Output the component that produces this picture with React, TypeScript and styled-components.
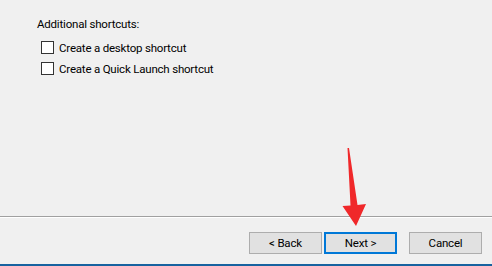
import styled, { createGlobalStyle } from "styled-components";

const uiFont = `"Segoe UI", Roboto, "Noto Sans", sans-serif`;

const GlobalStyle = createGlobalStyle`
  html, body {
    margin: 0;
    padding: 0;
    background: #f0f0f0;
  }
  body {
    font-family: ${uiFont};
    font-size: 11.5px;
    letter-spacing: -0.2px;
    color: #000;
  }
`;

const Window = styled.div`
  position: relative;
  width: 492px;
  height: 266px;
  display: flex;
  flex-direction: column;
  background: #f0f0f0;
  overflow: hidden;
`;

const Body = styled.div`
  flex: 0 0 216px;
  padding: 16px 0 0 37px;
  box-sizing: border-box;
`;

const Label = styled.div`
  height: 16px;
  line-height: 16px;
  margin-bottom: 5px;
`;

const CheckRow = styled.label`
  display: flex;
  align-items: center;
  gap: 5px;
  height: 21px;
  line-height: 16px;
  margin-left: 4px;
`;

const Box = styled.span`
  width: 11px;
  height: 11px;
  border: 1px solid #333;
  background: #fff;
  flex: none;
`;

const Separator = styled.div`
  height: 1px;
  background: #a0a0a0;
  border-bottom: 1px solid #fff;
`;

const ButtonBar = styled.div`
  display: flex;
  justify-content: flex-end;
  padding: 14px 10px 0 0;
  flex: 1;
`;

const Button = styled.button<{ $primary?: boolean; $gap?: number }>`
  width: 73px;
  height: 22px;
  margin-left: ${(p) => p.$gap ?? 0}px;
  box-sizing: border-box;
  font-family: ${uiFont};
  font-size: 11.5px;
  letter-spacing: -0.2px;
  color: #000;
  background: #e1e1e1;
  border: ${(p) => (p.$primary ? "2px solid #0078d7" : "1px solid #adadad")};
  padding: 0;
  outline: none;
`;

const BottomEdge = styled.div`
  height: 2px;
  background: #17629f;
`;

const Arrow = styled.svg`
  position: absolute;
  left: 0;
  top: 0;
  pointer-events: none;
`;

export default function App() {
  return (
    <Window>
      <GlobalStyle />
      <Body>
        <Label>Additional shortcuts:</Label>
        <CheckRow>
          <Box />
          Create a desktop shortcut
        </CheckRow>
        <CheckRow>
          <Box />
          Create a Quick Launch shortcut
        </CheckRow>
      </Body>
      <Separator />
      <ButtonBar>
        <Button>&lt; Back</Button>
        <Button $primary $gap={2}>Next &gt;</Button>
        <Button $gap={12}>Cancel</Button>
      </ButtonBar>
      <BottomEdge />
      <Arrow width="492" height="266" viewBox="0 0 492 266">
        <polygon
          points="347.5,148 349,148 357.5,205 366,204 356,226 342.5,206 350.5,205.5"
          fill="#f0282a"
        />
      </Arrow>
    </Window>
  );
}
